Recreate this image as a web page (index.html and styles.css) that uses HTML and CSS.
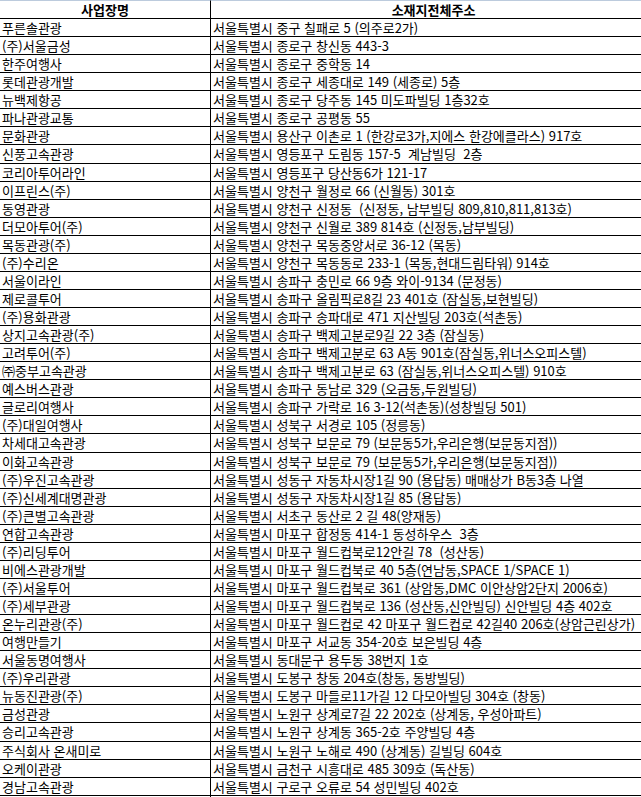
FILE: index.html
```html
<!DOCTYPE html>
<html lang="ko">
<head>
<meta charset="utf-8">
<title>사업장 목록</title>
<link rel="stylesheet" href="styles.css">
</head>
<body>
<table class="sheet">
<colgroup><col class="c-name"><col class="c-addr"></colgroup>
<thead>
<tr><th class="name">사업장명</th><th class="addr">소재지전체주소</th></tr>
</thead>
<tbody>
<tr><td class="name">푸른솔관광</td><td class="addr">서울특별시 중구 칠패로 5 (의주로2가)</td></tr>
<tr><td class="name">(주)서울금성</td><td class="addr">서울특별시 종로구 창신동 443-3</td></tr>
<tr><td class="name">한주여행사</td><td class="addr">서울특별시 종로구 중학동 14</td></tr>
<tr><td class="name">롯데관광개발</td><td class="addr">서울특별시 종로구 세종대로 149 (세종로) 5층</td></tr>
<tr><td class="name">뉴백제항공</td><td class="addr">서울특별시 종로구 당주동 145 미도파빌딩 1층32호</td></tr>
<tr><td class="name">파나관광교통</td><td class="addr">서울특별시 종로구 공평동 55</td></tr>
<tr><td class="name">문화관광</td><td class="addr">서울특별시 용산구 이촌로 1 (한강로3가,지에스 한강에클라스) 917호</td></tr>
<tr><td class="name">신풍고속관광</td><td class="addr">서울특별시 영등포구 도림동 157-5  계남빌딩  2층</td></tr>
<tr><td class="name">코리아투어라인</td><td class="addr">서울특별시 영등포구 당산동6가 121-17</td></tr>
<tr><td class="name">이프린스(주)</td><td class="addr">서울특별시 양천구 월정로 66 (신월동) 301호</td></tr>
<tr><td class="name">동영관광</td><td class="addr">서울특별시 양천구 신정동  (신정동, 남부빌딩 809,810,811,813호)</td></tr>
<tr><td class="name">더모아투어(주)</td><td class="addr">서울특별시 양천구 신월로 389 814호 (신정동,남부빌딩)</td></tr>
<tr><td class="name">목동관광(주)</td><td class="addr">서울특별시 양천구 목동중앙서로 36-12 (목동)</td></tr>
<tr><td class="name">(주)수리온</td><td class="addr">서울특별시 양천구 목동동로 233-1 (목동,현대드림타워) 914호</td></tr>
<tr><td class="name">서울이라인</td><td class="addr">서울특별시 송파구 충민로 66 9층 와이-9134 (문정동)</td></tr>
<tr><td class="name">제로콜투어</td><td class="addr">서울특별시 송파구 올림픽로8길 23 401호 (잠실동,보현빌딩)</td></tr>
<tr><td class="name">(주)용화관광</td><td class="addr">서울특별시 송파구 송파대로 471 지산빌딩 203호(석촌동)</td></tr>
<tr><td class="name">상지고속관광(주)</td><td class="addr">서울특별시 송파구 백제고분로9길 22 3층 (잠실동)</td></tr>
<tr><td class="name">고려투어(주)</td><td class="addr">서울특별시 송파구 백제고분로 63 A동 901호(잠실동,위너스오피스텔)</td></tr>
<tr><td class="name">㈜중부고속관광</td><td class="addr">서울특별시 송파구 백제고분로 63 (잠실동,위너스오피스텔) 910호</td></tr>
<tr><td class="name">예스버스관광</td><td class="addr">서울특별시 송파구 동남로 329 (오금동,두원빌딩)</td></tr>
<tr><td class="name">글로리여행사</td><td class="addr">서울특별시 송파구 가락로 16 3-12(석촌동)(성창빌딩 501)</td></tr>
<tr><td class="name">(주)대일여행사</td><td class="addr">서울특별시 성북구 서경로 105 (정릉동)</td></tr>
<tr><td class="name">차세대고속관광</td><td class="addr">서울특별시 성북구 보문로 79 (보문동5가,우리은행(보문동지점))</td></tr>
<tr><td class="name">이화고속관광</td><td class="addr">서울특별시 성북구 보문로 79 (보문동5가,우리은행(보문동지점))</td></tr>
<tr><td class="name">(주)우진고속관광</td><td class="addr">서울특별시 성동구 자동차시장1길 90 (용답동) 매매상가 B동3층 나열</td></tr>
<tr><td class="name">(주)신세계대명관광</td><td class="addr">서울특별시 성동구 자동차시장1길 85 (용답동)</td></tr>
<tr><td class="name">(주)큰별고속관광</td><td class="addr">서울특별시 서초구 동산로 2 길 48(양재동)</td></tr>
<tr><td class="name">연합고속관광</td><td class="addr">서울특별시 마포구 합정동 414-1 동성하우스  3층</td></tr>
<tr><td class="name">(주)리딩투어</td><td class="addr">서울특별시 마포구 월드컵북로12안길 78  (성산동)</td></tr>
<tr><td class="name">비에스관광개발</td><td class="addr">서울특별시 마포구 월드컵북로 40 5층(연남동,SPACE 1/SPACE 1)</td></tr>
<tr><td class="name">(주)서울투어</td><td class="addr">서울특별시 마포구 월드컵북로 361 (상암동,DMC 이안상암2단지 2006호)</td></tr>
<tr><td class="name">(주)세부관광</td><td class="addr">서울특별시 마포구 월드컵북로 136 (성산동,신안빌딩) 신안빌딩 4층 402호</td></tr>
<tr><td class="name">온누리관광(주)</td><td class="addr">서울특별시 마포구 월드컵로 42 마포구 월드컵로 42길40 206호(상암근린상가)</td></tr>
<tr><td class="name">여행만들기</td><td class="addr">서울특별시 마포구 서교동 354-20호 보은빌딩 4층</td></tr>
<tr><td class="name">서울동명여행사</td><td class="addr">서울특별시 동대문구 용두동 38번지 1호</td></tr>
<tr><td class="name">(주)우리관광</td><td class="addr">서울특별시 도봉구 창동 204호(창동, 동방빌딩)</td></tr>
<tr><td class="name">뉴동진관광(주)</td><td class="addr">서울특별시 도봉구 마들로11가길 12 다모아빌딩 304호 (창동)</td></tr>
<tr><td class="name">금성관광</td><td class="addr">서울특별시 노원구 상계로7길 22 202호 (상계동, 우성아파트)</td></tr>
<tr><td class="name">승리고속관광</td><td class="addr">서울특별시 노원구 상계동 365-2호 주양빌딩 4층</td></tr>
<tr><td class="name">주식회사 온새미로</td><td class="addr">서울특별시 노원구 노해로 490 (상계동) 길빌딩 604호</td></tr>
<tr><td class="name">오케이관광</td><td class="addr">서울특별시 금천구 시흥대로 485 309호 (독산동)</td></tr>
<tr><td class="name">경남고속관광</td><td class="addr">서울특별시 구로구 오류로 54 성민빌딩 402호</td></tr>
<tr><td class="name"></td><td class="addr"></td></tr>
</tbody>
</table>
</body>
</html>
```
FILE: styles.css
```css
html, body {
  margin: 0;
  padding: 0;
  background: #ffffff;
  overflow: hidden;
}

.sheet {
  border-collapse: separate;
  border-spacing: 0;
  table-layout: fixed;
  width: 656px;
  font-family: "Noto Sans CJK KR", "Noto Sans", sans-serif;
  font-size: 13px;
  color: #000000;
}

.c-name { width: 211px; }
.c-addr { width: 445px; }

.sheet th,
.sheet td {
  box-sizing: border-box;
  padding: 0 0 0 2px;
  border-bottom: 1px solid #000000;
  white-space: pre;
  overflow: hidden;
  vertical-align: middle;
  line-height: 15px;
  text-align: left;
}

.sheet td.name,
.sheet th.name {
  border-right: 1px solid #000000;
}

.sheet thead tr { height: 19px; }
.sheet tbody tr { height: 18.07px; }

.sheet th {
  border-top: 1px solid #bccbdd;
  font-weight: 700;
  text-align: center;
  padding: 0;
}
```
